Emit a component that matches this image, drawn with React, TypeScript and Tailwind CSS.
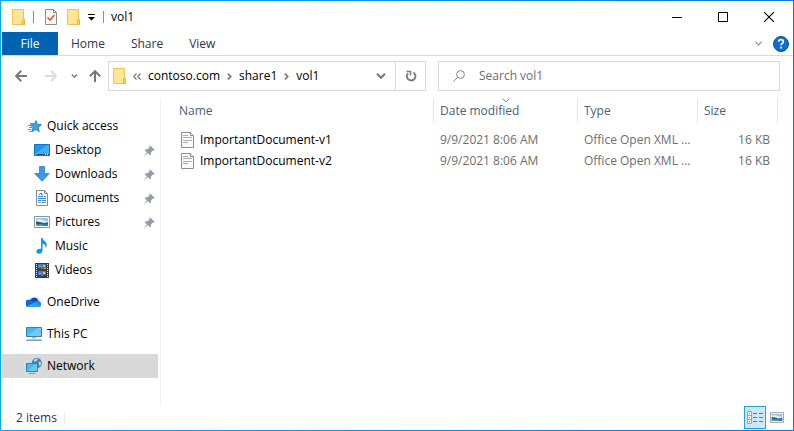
import {FC, ReactNode} from 'react';
import clsx from 'clsx';

type IconProps = {className?: string};

const FolderIcon: FC<IconProps> = ({className}) => (
  <svg className={clsx('h-4 w-[13px] shrink-0', className)} viewBox="0 0 13 16" fill="none">
    <path d="M.5.5h11v9l1 1v5H.5z" fill="#ffe694" stroke="#eec553" />
    <path d="M10.5 15.5v-5l1-1 1 1v5z" fill="#fbd45f" stroke="#e5b63c" />
  </svg>
);

const CheckedPageIcon: FC = () => (
  <svg className="h-4 w-3 shrink-0" viewBox="0 0 12 16" fill="none">
    <path d="M.5.5h8l3 3v12H.5z" fill="#fafafa" stroke="#8a8a8a" />
    <path d="M8.5.5v3h3" stroke="#8a8a8a" />
    <path d="M2.5 8.5 5 11l4.500-5" stroke="#e8561c" strokeWidth="1.6" />
  </svg>
);

const PageIcon: FC = () => (
  <svg className="h-4 w-[13px] shrink-0" viewBox="0 0 13 16" fill="none">
    <path d="M.5.5h9l3 3v12H.5z" fill="#fafafa" stroke="#8c8c8c" />
    <path d="M9.5.5v3h3" fill="#fff" stroke="#8c8c8c" />
    <path d="M2 3.500h5M2 5.500h9M2 8.500h9M2 10.500h5" stroke="#a9acba" />
  </svg>
);

const Chevron: FC<IconProps & {strokeWidth?: number}> = ({className, strokeWidth = 1.5}) => (
  <svg className={clsx('shrink-0', className)} viewBox="0 0 10 6" fill="none" stroke="currentColor" strokeWidth={strokeWidth}>
    <path d="m1 .8 4 4 4-4" />
  </svg>
);

const CrumbArrow: FC = () => (
  <svg className="h-[7px] w-[5px] shrink-0 text-[#7a7a7a]" viewBox="0 0 5 7" fill="none" stroke="currentColor" strokeWidth="1.7">
    <path d="m.8.6 2.900 2.900-2.900 2.900" />
  </svg>
);

const ArrowIcon: FC<IconProps> = ({className}) => (
  <svg className={clsx('h-3 w-3', className)} viewBox="0 0 12 12" fill="none" stroke="currentColor" strokeWidth="2">
    <path d="M12 6H1.500M6.200.8 1.200 6l5 5.200" />
  </svg>
);

const PinIcon: FC = () => (
  <svg className="h-[11px] w-[11px] shrink-0" viewBox="0 0 11 11">
    <path d="M6 .3 10.700 5l-1 .7-.9-.2-1.900 1.900.1 2.100-1 .9-2.300-2.300L.5 10.800l-.3-.3 2.600-3.100L.7 5.200l1-1 2 .1 1.900-1.900-.3-1z" fill="#939da5" />
  </svg>
);

const StarIcon: FC = () => (
  <svg className="h-4 w-4" viewBox="0 0 16 16">
    <path d="m10 2.500 1.500 4 4 .2-3.200 2.600.9 4.400-3.500-2.300-4 2.500 1.300-4.200L4.200 6.800l4-.2z" fill="#3ba4ee" stroke="#1779c8" strokeWidth=".8" />
    <path d="M4 5.500h4M2 7.500h3M3 9.500h3M1.500 11.500h4M3 13.500h2" stroke="#3c9ee6" />
  </svg>
);

const DesktopIcon: FC = () => (
  <svg className="h-4 w-4" viewBox="0 0 16 16">
    <path d="M.5 2.500h15v11H.5z" fill="#1e96f0" stroke="#1373c4" />
    <path d="M1 12 13 3h2v9z" fill="#42adf8" />
    <path d="M1 12h14v1H1z" fill="#0d4e8a" />
    <path d="M1.500 12.500h1M11 12.500h1M13 12.500h1" stroke="#fff" />
  </svg>
);

const DownloadIcon: FC = () => (
  <svg className="h-4 w-4" viewBox="0 0 16 16">
    <path d="M5.500.5h5v7h4.700L8 15.200.8 7.500h4.700z" fill="#3e97ea" stroke="#2580d4" strokeWidth=".8" />
  </svg>
);

const DocumentsIcon: FC = () => (
  <svg className="h-4 w-4" viewBox="0 0 16 16" fill="none">
    <path d="M2.500.5h8l3 3v12h-11z" fill="#fff" stroke="#8b8b8b" />
    <path d="M10.500.5v3h3" stroke="#8b8b8b" />
    <path d="M6 3.500h2M5 4.500h1M7 4.500h2M4 6.500h5M10 6.500h2M4 8.500h8M4 10.500h3M8 10.500h4" stroke="#2589dc" />
    <path d="M4 12.500h3M8 12.500h4" stroke="#7e8a94" />
  </svg>
);

const PictureIcon: FC<IconProps> = ({className}) => (
  <svg className={className} viewBox="0 0 16 12">
    <path d="M.5.5h15v11H.5z" fill="#fff" stroke="#919191" />
    <path d="M2 2h12v8H2z" fill="#8fc8f1" />
    <path d="M2 4.500 5 3l5 1.500 4 1V7H2z" fill="#e2f0f8" />
    <path d="M2 5.300 6 6l4 1 4-.8V8H2z" fill="#36566c" />
    <path d="M2 8h12v2H2z" fill="#2f76b0" />
    <path d="M2 8.500h6l2 1.500H2z" fill="#5f98bb" />
  </svg>
);

const MusicIcon: FC = () => (
  <svg className="h-4 w-4" viewBox="0 0 16 16">
    <path d="M7 0h1.500c.3 2.500 4.200 3.500 4.200 6.800 0 1.300-.5 2.500-1.300 3.400.4-2.500-.7-3.900-2.900-4.400v7c0 1.800-1.600 3-3.500 3-1.700 0-2.700-.9-2.700-2.200 0-1.600 1.700-2.900 3.700-2.900.4 0 .7 0 1 .1z" fill="#0f98f4" />
  </svg>
);

const VideosIcon: FC = () => (
  <svg className="h-4 w-4" viewBox="0 0 16 16">
    <path d="M1 1h14v15H1z" fill="#3a3a3a" />
    <path d="M2.500 2v14M13.500 2v14" stroke="#e8e8e8" strokeDasharray="1 1" />
    <path d="M4 2h8v6H4zM4 9h8v6H4z" fill="#3d7de0" />
    <path d="M4 6h2l2-1 2 1h2v2H4zM4 13h2l2-1 2 1h2v2H4z" fill="#26467b" />
    <path d="M9 3h2v2H9zM9 10h2v2H9z" fill="#f4c62c" />
    <path d="M7 5h2v2H7zM7 12h2v2H7z" fill="#d0574a" />
    <path d="M5 4h2v1H5zM5 11h2v1H5zM10 6h2v1h-2z" fill="#8bc14b" />
  </svg>
);

const OneDriveIcon: FC = () => (
  <svg className="h-4 w-4" viewBox="0 0 16 16">
    <path d="M4 6a4.600 4.600 0 0 1 8.500.8L10 10 2 12.500A3.300 3.300 0 0 1 4 6z" fill="#0a4fb5" />
    <path d="M3.500 5.900C5 5.700 6.200 6.200 7 6.800L11 9l-9 4A3.600 3.600 0 0 1 3.500 5.900z" fill="#1565cf" />
    <path d="M8.500 8.500c.8-1.200 2.300-2 4-1.700A3.200 3.200 0 0 1 13 13H9z" fill="#1d8de0" />
    <path d="M1.200 12 8.600 8.400 15 12c-.5.7-1.200 1-2 1H3.500c-1 0-1.700-.3-2.300-1z" fill="#2ba2f3" />
  </svg>
);

const ComputerIcon: FC = () => (
  <svg className="h-4 w-4" viewBox="0 0 16 16">
    <path d="M.5 1.500h15v9H.5z" fill="#48b6f5" stroke="#3d7ea6" />
    <path d="M1 10 12 2h3v8z" fill="#6ccaff" />
    <path d="M6 11h4v1.500H6z" fill="#a8b6c2" />
    <path d="M1 13.500h14" stroke="#c2cbd2" />
    <path d="M0 14.500h16" stroke="#8399a9" />
  </svg>
);

const NetworkIcon: FC = () => (
  <svg className="h-4 w-4" viewBox="0 0 16 16">
    <circle cx="10.800" cy="5.200" r="5.100" fill="#4185ad" />
    <path d="M8 1.700c2-1.500 3.500-1 4 0l-2 1.500-2 .5zM12.500 4l2-.5.7 3L13.500 8z" fill="#b7dbe9" />
    <path d="M.5 5.500h11v8H.5z" fill="#45b7f6" stroke="#327da9" />
    <path d="M1 13 9 6h2v7z" fill="#65c7fc" />
    <path d="M3 15.500h6" stroke="#7e99aa" />
  </svg>
);

const SearchIcon: FC = () => (
  <svg className="h-3 w-3 shrink-0" viewBox="0 0 12 12" fill="none" stroke="#82828c">
    <circle cx="7.500" cy="4.500" r="3.900" />
    <path d="M4.700 7.300.4 11.600" />
  </svg>
);

const RefreshIcon: FC = () => (
  <svg className="h-3 w-3" viewBox="0 0 12 12" fill="none" stroke="#7b7b7b" strokeWidth="1.900">
    <path d="M8.300 2.500A4.300 4.300 0 1 1 3 3.300" />
    <path d="M1.500 1.500h4v4" strokeWidth="1.600" />
  </svg>
);

type Place = {
  name: string;
  icon: ReactNode;
  nested?: boolean;
  pinned?: boolean;
  selected?: boolean;
};

const placeGroups: Place[][] = [
  [
    {name: 'Quick access', icon: <StarIcon />},
    {name: 'Desktop', icon: <DesktopIcon />, nested: true, pinned: true},
    {name: 'Downloads', icon: <DownloadIcon />, nested: true, pinned: true},
    {name: 'Documents', icon: <DocumentsIcon />, nested: true, pinned: true},
    {name: 'Pictures', icon: <PictureIcon className="h-3 w-4" />, nested: true, pinned: true},
    {name: 'Music', icon: <MusicIcon />, nested: true},
    {name: 'Videos', icon: <VideosIcon />, nested: true},
  ],
  [{name: 'OneDrive', icon: <OneDriveIcon />}],
  [{name: 'This PC', icon: <ComputerIcon />}],
  [{name: 'Network', icon: <NetworkIcon />, selected: true}],
];

const files = [
  {name: 'ImportantDocument-v1', modified: '9/9/2021 8:06 AM', type: 'Office Open XML ...', size: '16 KB'},
  {name: 'ImportantDocument-v2', modified: '9/9/2021 8:06 AM', type: 'Office Open XML ...', size: '16 KB'},
];

const TitleBar: FC = () => (
  <header className="flex h-[31px] items-center pr-px pl-[11px]">
    <FolderIcon />
    <span className="ml-2 h-3 w-px bg-[#8f8f8f]" />
    <div className="ml-[11px] flex items-center gap-2.5">
      <button type="button" aria-label="Properties">
        <CheckedPageIcon />
      </button>
      <button type="button" aria-label="New folder">
        <FolderIcon />
      </button>
    </div>
    <button type="button" aria-label="Customize Quick Access Toolbar" className="ml-2">
      <svg className="h-[9px] w-[7px]" viewBox="0 0 7 9">
        <path d="M0 2h7v1H0zM0 5h7L3.500 8.500z" />
      </svg>
    </button>
    <span className="ml-2 h-3 w-px bg-[#8f8f8f]" />
    <h1 className="ml-[7px] flex-1">vol1</h1>
    <button type="button" aria-label="Minimize" className="flex h-full w-[46px] items-center justify-center">
      <svg className="h-2.5 w-2.5" viewBox="0 0 10 10" stroke="#000">
        <path d="M0 5.500h10" />
      </svg>
    </button>
    <button type="button" aria-label="Maximize" className="flex h-full w-[46px] items-center justify-center">
      <svg className="h-2.5 w-2.5" viewBox="0 0 10 10" fill="none" stroke="#000">
        <path d="M.5.5h9v9h-9z" />
      </svg>
    </button>
    <button type="button" aria-label="Close" className="flex h-full w-[46px] items-center justify-center">
      <svg className="h-2.5 w-2.5" viewBox="0 0 10 10" stroke="#000" strokeWidth="1.100">
        <path d="m0 0 10 10M10 0 0 10" />
      </svg>
    </button>
  </header>
);

const RibbonTabs: FC = () => (
  <div className="flex h-6 items-stretch border-b border-[#dadbdc] pl-px text-[#333345]">
    <button type="button" className="w-14 bg-[#0063b1] text-white">
      File
    </button>
    {['Home', 'Share', 'View'].map(tab => (
      <button key={tab} type="button" className="px-[13px]">
        {tab}
      </button>
    ))}
    <div className="ml-auto flex items-center gap-2.5 pr-1">
      <button type="button" aria-label="Expand the ribbon">
        <Chevron className="h-[5px] w-[9px] text-[#9b9b9b]" />
      </button>
      <button type="button" aria-label="Help">
        <svg className="h-4 w-4" viewBox="0 0 16 16" fill="none">
          <circle cx="8" cy="8" r="7.500" fill="#0f6fd0" stroke="#0b4f93" />
          <path d="M5.700 5.800C5.700 4.400 6.700 3.700 8 3.700s2.300.8 2.300 2c0 1.700-2.200 1.700-2.200 3.600" stroke="#fff" strokeWidth="1.700" />
          <path d="M7.200 10.700H9v1.800H7.200z" fill="#fff" />
        </svg>
      </button>
    </div>
  </div>
);

const AddressBar: FC = () => (
  <div className="flex items-center py-[5px] pr-[13px]">
    <div className="flex w-[107px] shrink-0 items-center pl-3.5 text-[#777]">
      <button type="button" aria-label="Back">
        <ArrowIcon />
      </button>
      <button type="button" aria-label="Forward" disabled className="ml-[18px] text-[#dcdcdc]">
        <ArrowIcon className="rotate-180" />
      </button>
      <button type="button" aria-label="Recent locations" className="ml-[14px]">
        <Chevron className="h-1 w-[7px]" strokeWidth={2} />
      </button>
      <button type="button" aria-label="Up" className="ml-[11px]">
        <ArrowIcon className="rotate-90" />
      </button>
    </div>
    <div className="flex h-[30px] min-w-[318px] flex-1 items-stretch border border-[#d9d9d9]">
      <div className="flex flex-1 items-center gap-[7px] pl-1">
        <FolderIcon />
        <svg className="h-[7px] w-2" viewBox="0 0 8 7" fill="none" stroke="#777" strokeWidth="1.200">
          <path d="M3.500.5.8 3.500l2.700 3M7.500.5l-2.700 3 2.700 3" />
        </svg>
        <button type="button">contoso.com</button>
        <CrumbArrow />
        <button type="button">share1</button>
        <CrumbArrow />
        <button type="button">vol1</button>
        <button type="button" aria-label="Previous locations" className="mr-[9px] ml-auto text-[#777]">
          <Chevron className="h-1.5 w-2.5" strokeWidth={2} />
        </button>
      </div>
      <button type="button" aria-label="Refresh" className="flex w-[30px] items-center justify-center border-l border-[#d9d9d9]">
        <RefreshIcon />
      </button>
    </div>
    <label className="ml-3 flex h-[30px] w-[342px] items-center gap-3.5 border border-[#d9d9d9] pl-3.5">
      <SearchIcon />
      <input type="text" aria-label="Search vol1" placeholder="Search vol1" className="min-w-0 flex-1 outline-none placeholder:text-[#6d6d6d]" />
    </label>
  </div>
);

const Sidebar: FC = () => (
  <nav className="mt-0.5 flex w-40 shrink-0 flex-col gap-2 border-r border-[#f0f0f0] pt-4 pr-0.5 pl-px">
    {placeGroups.map(group => (
      <ul key={group[0].name}>
        {group.map(place => (
          <li key={place.name}>
            <a
              href="#"
              className={clsx(
                'flex h-6 items-center gap-[5px] pr-[3px]',
                place.nested ? 'pl-8' : 'pl-6',
                place.selected && 'bg-[#d9d9d9]'
              )}>
              {place.icon}
              <span className="flex-1 whitespace-nowrap">{place.name}</span>
              {place.pinned && <PinIcon />}
            </a>
          </li>
        ))}
      </ul>
    ))}
  </nav>
);

const FileList: FC = () => (
  <main className="min-w-0 flex-1 pt-0.5 pr-[15px]">
    <table className="w-full table-fixed border-separate border-spacing-0 text-left whitespace-nowrap">
      <colgroup>
        <col />
        <col className="w-36" />
        <col className="w-[120px]" />
        <col className="w-20" />
      </colgroup>
      <thead className="text-[#4c607a]">
        <tr className="h-[25px]">
          <th className="border-r border-[#e5e5e5] pl-[18px] font-normal">Name</th>
          <th className="relative border-r border-[#e5e5e5] pl-1.5 font-normal">
            <Chevron className="absolute top-0 left-1/2 h-[5px] w-2 -translate-x-1/2 text-[#7a7a7a]" strokeWidth={1.2} />
            Date modified
          </th>
          <th className="border-r border-[#e5e5e5] pl-1.5 font-normal">Type</th>
          <th className="border-r border-[#e5e5e5] pl-1.5 font-normal">Size</th>
        </tr>
      </thead>
      <tbody className="text-[#6d6d6d] before:block before:h-1.5">
        {files.map(file => (
          <tr key={file.name} className="h-[21px]">
            <td className="pl-5 text-black">
              <div className="flex items-center gap-1.5">
                <PageIcon />
                {file.name}
              </div>
            </td>
            <td className="pl-1.5">{file.modified}</td>
            <td className="pl-1.5">{file.type}</td>
            <td className="pr-2 text-right">{file.size}</td>
          </tr>
        ))}
      </tbody>
    </table>
  </main>
);

const StatusBar: FC = () => (
  <footer className="flex h-6 items-center pl-[15px] text-[#25355c]">
    <span className="w-12">2 items</span>
    <span className="h-3 w-px bg-[#ececec]" />
    <div className="ml-auto flex items-center gap-1 self-start pr-[9px]">
      <button
        type="button"
        aria-label="Details"
        className="flex h-[23px] w-[22px] items-center justify-center border border-[#26a0da] bg-[#cbe8f6]">
        <svg className="h-[13px] w-4" viewBox="0 0 16 13" fill="none">
          <path d="M.5.5h4v12h-4z" fill="#fff" stroke="#a0a0a0" />
          <path d="M.5 4.500h4M.5 8.500h4" stroke="#a0a0a0" />
          <path d="M2 2.500h1" stroke="#3b8f5a" />
          <path d="M2 6.500h1" stroke="#3087e0" />
          <path d="M2 10.500h1" stroke="#d62b1f" />
          <path d="M6 2.500h4M12 2.500h4M6 6.500h4M12 6.500h4M6 10.500h4M12 10.500h4" stroke="#6f7478" />
        </svg>
      </button>
      <button type="button" aria-label="Large icons">
        <PictureIcon className="h-[11px] w-3.5" />
      </button>
    </div>
  </footer>
);

const App: FC = () => (
  <div className="flex min-h-screen bg-linear-to-r from-[#00aaff] to-[#0a78dc] p-px font-['Open_Sans','Noto_Sans',sans-serif] text-xs text-black">
    <div className="flex min-w-0 flex-1 flex-col bg-white">
      <TitleBar />
      <RibbonTabs />
      <AddressBar />
      <div className="flex flex-1">
        <Sidebar />
        <FileList />
      </div>
      <StatusBar />
    </div>
  </div>
);

export default App;
